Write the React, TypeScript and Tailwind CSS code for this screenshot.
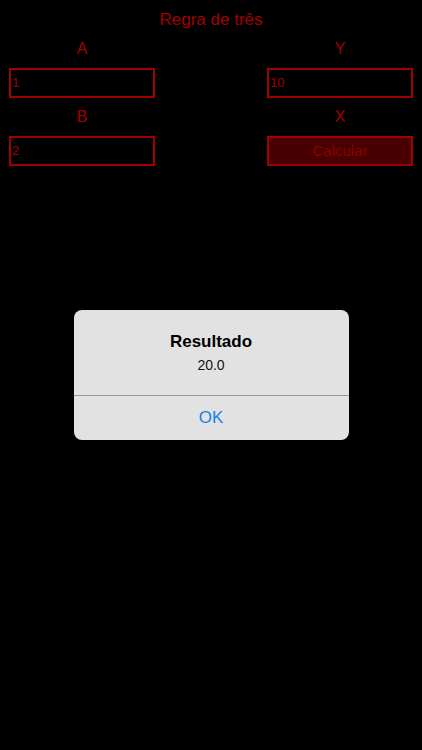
export default function App() {
  return (
    <div className="relative h-[750px] w-full overflow-hidden bg-black font-['Liberation_Sans',Arial,sans-serif]">
      <div className="pl-[9px] pr-[9px] pt-[10px]">
        <div className="h-5 text-center text-[17px] leading-5 text-[#a30000]">Regra de três</div>

        <div className="mt-[9px] flex justify-between">
          <div className="flex w-[146px] flex-col">
            <div className="h-5 text-center text-[16px] leading-5 text-[#a30000]">A</div>
            <div className="mt-[9px] flex h-[30px] items-center border-2 border-[#a00000] pl-px text-[13px] text-[#a30000]">1</div>
            <div className="mt-[9px] h-5 text-center text-[16px] leading-5 text-[#a30000]">B</div>
            <div className="mt-[9px] flex h-[30px] items-center border-2 border-[#a00000] pl-px text-[13px] text-[#a30000]">2</div>
          </div>
          <div className="flex w-[146px] flex-col">
            <div className="h-5 text-center text-[16px] leading-5 text-[#a30000]">Y</div>
            <div className="mt-[9px] flex h-[30px] items-center border-2 border-[#a00000] pl-px text-[13px] text-[#a30000]">10</div>
            <div className="mt-[9px] h-5 text-center text-[16px] leading-5 text-[#a30000]">X</div>
            <div className="mt-[9px] flex h-[30px] items-center justify-center border-2 border-[#a00000] bg-[#480000] text-[15px] text-[#8c0000]">Calcular</div>
          </div>
        </div>
      </div>

      <div className="absolute inset-0 flex items-center justify-center">
        <div className="flex h-[130px] w-[275px] flex-col overflow-hidden rounded-lg bg-[#e2e2e2]">
          <div className="flex flex-1 flex-col items-center pt-[21px]">
            <div className="text-[17px] font-bold leading-[21px] text-black">Resultado</div>
            <div className="mt-[5px] text-[14px] leading-4 text-[#111]">20.0</div>
          </div>
          <div className="h-px bg-[#9a9a9a]" />
          <div className="flex h-[44px] items-center justify-center text-[17px] text-[#1a7fe8]">OK</div>
        </div>
      </div>
    </div>
  );
}
